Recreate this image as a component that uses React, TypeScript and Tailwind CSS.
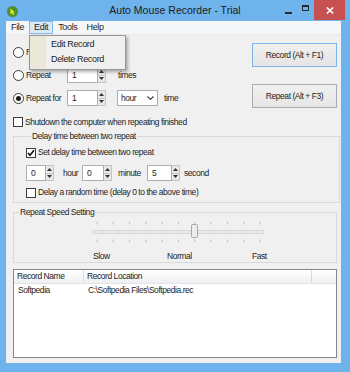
import React from "react";

function Radio({ checked }: { checked?: boolean }) {
  return (
    <span className="w-[11px] h-[11px] rounded-full border border-[#3c3c3c] bg-white flex items-center justify-center shrink-0">
      {checked && <span className="w-[5px] h-[5px] rounded-full bg-[#1a1a1a]" />}
    </span>
  );
}

function Check({ checked }: { checked?: boolean }) {
  return (
    <span className="w-[10px] h-[10px] border border-[#3c3c3c] bg-white shrink-0 flex items-center justify-center">
      {checked && (
        <svg width="8" height="8" viewBox="0 0 8 8">
          <path d="M1 4 L3 6.2 L7 1.2" stroke="#111" strokeWidth="1.6" fill="none" />
        </svg>
      )}
    </span>
  );
}

function Spin({ value, w }: { value: string; w: string }) {
  return (
    <div className={`flex h-[16px] ${w}`}>
      <div className="flex-1 border border-[#abadb3] bg-white pl-[4px] leading-[14px]">{value}</div>
      <div className="w-[8px] flex flex-col border border-l-0 border-[#c4c4c4]">
        <span className="flex-1 bg-[#e8e8e8] flex items-center justify-center border-b border-[#c4c4c4]">
          <svg width="5" height="3" viewBox="0 0 5 3">
            <path d="M0 3 L2.5 0 L5 3Z" fill="#333" />
          </svg>
        </span>
        <span className="flex-1 bg-[#e8e8e8] flex items-center justify-center">
          <svg width="5" height="3" viewBox="0 0 5 3">
            <path d="M0 0 L2.5 3 L5 0Z" fill="#333" />
          </svg>
        </span>
      </div>
    </div>
  );
}

function Slider() {
  const ticks = Array.from({ length: 11 }, (_, i) => 7 + i * 16.3);
  return (
    <svg width="175" height="22" viewBox="0 0 175 22" className="block">
      {ticks.map((x, i) => (
        <g key={i}>
          <line x1={x} y1="1" x2={x} y2="3.5" stroke="#b9b9b9" strokeWidth="1" />
          <line x1={x} y1="18.5" x2={x} y2="21" stroke="#b9b9b9" strokeWidth="1" />
        </g>
      ))}
      <rect x="3.5" y="9.5" width="170" height="3" fill="#e7eaea" stroke="#d6d6d6" />
      <rect x="101.5" y="3.5" width="6" height="13" rx="1" fill="#ececec" stroke="#a8a8a8" />
    </svg>
  );
}

export default function App() {
  return (
    <div className="w-[350px] h-[372px] bg-[#6fb3ec] flex flex-col overflow-hidden font-['Liberation_Sans',Arial,sans-serif] text-[8.5px] tracking-[-0.45px] text-[#1e1e1e]">
      {/* Title bar */}
      <div className="h-[21px] grid grid-cols-[1fr_auto_1fr] items-start">
        <div className="pl-[7px] pt-[6px]">
          <svg width="11" height="11" viewBox="0 0 11 11">
            <circle cx="5.5" cy="5.5" r="5.5" fill="#4f8f33" />
            <path d="M3.5 2.5 L3.5 8.5 L5 7 L6.2 9.3 L7.2 8.8 L6 6.6 L8 6.4 Z" fill="#e4f21a" />
          </svg>
        </div>
        <div className="pt-[3px] text-[10.5px] tracking-normal leading-[14px] text-[#1b1b1b]">
          Auto Mouse Recorder - Trial
        </div>
        <div className="flex justify-end items-start pr-[5px]">
          <div className="mt-[12px] w-[7px] h-[2px] bg-[#2a2a2a]" />
          <div className="ml-[10px] mt-[5px] w-[7px] h-[6px] border border-[#2a2a2a] border-t-2" />
          <div className="ml-[5px] w-[31px] h-[20px] bg-[#c75050] flex items-center justify-center">
            <svg width="8" height="7" viewBox="0 0 8 7">
              <path d="M0.8 0.5 L7.2 6.5 M7.2 0.5 L0.8 6.5" stroke="#fff" strokeWidth="1.6" />
            </svg>
          </div>
        </div>
      </div>

      {/* Body */}
      <div className="flex-1 flex pl-[6px] pr-[9px] pb-[9px]">
        <div className="relative flex-1 flex flex-col bg-[#f0f0f0]">
          {/* Menu bar */}
          <div className="h-[14px] bg-[#f5f6f7] border-b border-[#e6e8ea] flex items-stretch text-[9px] tracking-[-0.35px]">
            <div className="px-[5px] leading-[13px]">File</div>
            <div className="px-[4px] leading-[11px] bg-[#d9e9f8] border border-[#86b9e8]">Edit</div>
            <div className="px-[5px] leading-[13px]">Tools</div>
            <div className="pl-[4px] pr-[5px] leading-[13px]">Help</div>
          </div>

          {/* Content */}
          <div className="flex-1 flex flex-col pl-[7px]">
            {/* Top section */}
            <div className="h-[95px] flex">
              <div className="w-[239px] flex flex-col pt-[9px]">
                <div className="h-[16px] flex items-center gap-[2px]">
                  <Radio />
                  <span>Repeat until stopped</span>
                </div>
                <div className="mt-[7px] h-[16px] flex items-center">
                  <div className="w-[54px] flex items-center gap-[2px]">
                    <Radio />
                    <span>Repeat</span>
                  </div>
                  <Spin value="1" w="w-[39px]" />
                  <span className="ml-[12px]">times</span>
                </div>
                <div className="mt-[7px] h-[16px] flex items-center">
                  <div className="w-[54px] flex items-center gap-[2px]">
                    <Radio checked />
                    <span className="whitespace-nowrap">Repeat for</span>
                  </div>
                  <Spin value="1" w="w-[39px]" />
                  <div className="ml-[11px] w-[41px] h-[16px] border border-[#abadb3] bg-white flex items-center justify-between pl-[3px] pr-[3px]">
                    <span className="leading-[14px]">hour</span>
                    <svg width="7" height="4" viewBox="0 0 7 4">
                      <path d="M0.5 0.5 L3.5 3.3 L6.5 0.5" stroke="#333" strokeWidth="1.1" fill="none" />
                    </svg>
                  </div>
                  <span className="ml-[6px]">time</span>
                </div>
                <div className="mt-[10px] h-[12px] flex items-center gap-[2px]">
                  <Check />
                  <span>Shutdown the computer when repeating finished</span>
                </div>
              </div>
              <div className="w-[85px] flex flex-col pt-[8px]">
                <div className="h-[24px] border border-[#7eb4ea] bg-gradient-to-b from-[#f0f0f0] to-[#e5e5e5] flex items-center justify-center">
                  Record (Alt + F1)
                </div>
                <div className="mt-[17px] h-[24px] border border-[#acacac] bg-gradient-to-b from-[#f0f0f0] to-[#e5e5e5] flex items-center justify-center">
                  Repeat (Alt + F3)
                </div>
              </div>
            </div>

            {/* Delay group */}
            <fieldset className="w-[327px] h-[73px] border border-[#d9d9d9] pl-[12px] pb-[4px]">
              <legend className="ml-[5px] px-[1px] leading-[12px]">Delay time between two repeat</legend>
              <div className="mt-[5px] h-[11px] flex items-center gap-[2px]">
                <Check checked />
                <span>Set delay time between two repeat</span>
              </div>
              <div className="mt-[7px] h-[16px] flex items-center">
                <Spin value="0" w="w-[28px]" />
                <span className="w-[28px] pl-[9px]">hour</span>
                <Spin value="0" w="w-[30px]" />
                <span className="w-[35px] pl-[6px]">minute</span>
                <Spin value="5" w="w-[33px]" />
                <span className="pl-[4px]">second</span>
              </div>
              <div className="mt-[6px] h-[11px] flex items-center gap-[2px]">
                <Check />
                <span>Delay a random time (delay 0 to the above time)</span>
              </div>
            </fieldset>

            {/* Speed group */}
            <fieldset className="mt-[3px] w-[324px] h-[57px] border border-[#d9d9d9]">
              <legend className="ml-[5px] px-[1px] leading-[12px]">Repeat Speed Setting</legend>
              <div className="mt-[3px] ml-[76px]">
                <Slider />
              </div>
              <div className="mt-[8px] ml-[79px] h-[10px] flex items-center">
                <span className="w-[74px]">Slow</span>
                <span className="w-[85px]">Normal</span>
                <span>Fast</span>
              </div>
            </fieldset>

            {/* List */}
            <div className="mt-[6px] w-[324px] h-[89px] border border-[#828790] bg-white flex flex-col">
              <div className="h-[14px] flex bg-gradient-to-b from-[#ffffff] to-[#eef0f2] border-b border-[#e2e4e7]">
                <div className="w-[70px] border-r border-[#d5d8dc] pl-[3px] leading-[13px]">Record Name</div>
                <div className="w-[228px] border-r border-[#d5d8dc] pl-[3px] leading-[13px]">Record Location</div>
                <div className="flex-1" />
              </div>
              <div className="mt-[1px] h-[11px] flex items-center">
                <div className="w-[70px] pl-[4px]">Softpedia</div>
                <div className="pl-[4px]">C:\Softpedia Files\Softpedia.rec</div>
              </div>
            </div>
          </div>
          <div className="h-[5px]" />

          {/* Dropdown menu */}
          <div className="absolute left-[23px] top-[14px] w-[97px] h-[35px] bg-[#f0f0f0] border border-[#979797] shadow-[2px_2px_3px_rgba(0,0,0,0.3)] flex text-[9px] tracking-[-0.35px]">
            <div className="w-[16px] bg-[#ebe8d9]" />
            <div className="flex-1 flex flex-col pt-[1px]">
              <div className="h-[15px] pl-[5px] leading-[15px]">Edit Record</div>
              <div className="h-[15px] pl-[5px] leading-[15px]">Delete Record</div>
            </div>
          </div>
        </div>
      </div>
    </div>
  );
}
